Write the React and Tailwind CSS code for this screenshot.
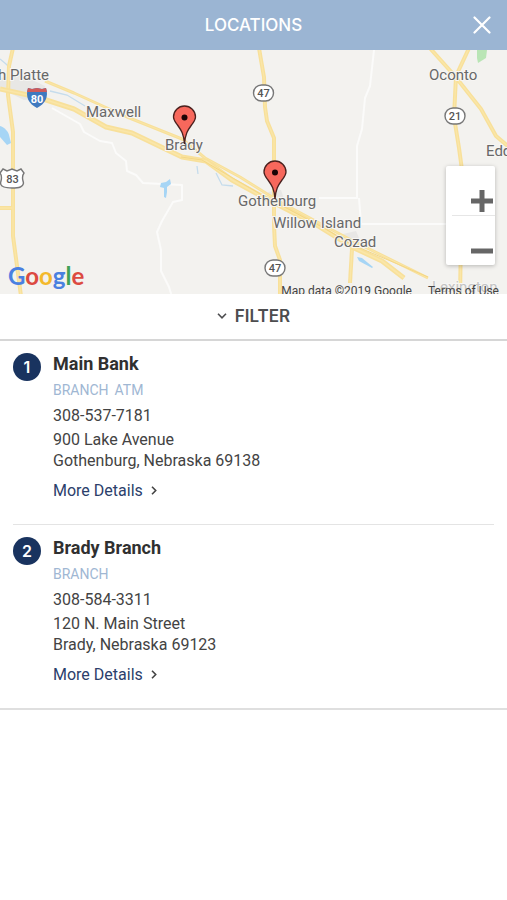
import React from "react";

const locations = [
  {
    name: "Main Bank",
    services: ["BRANCH", "ATM"],
    phone: "308-537-7181",
    street: "900 Lake Avenue",
    city: "Gothenburg, Nebraska 69138",
  },
  {
    name: "Brady Branch",
    services: ["BRANCH"],
    phone: "308-584-3311",
    street: "120 N. Main Street",
    city: "Brady, Nebraska 69123",
  },
];

function Header() {
  return (
    <header className="grid h-[50px] grid-cols-[1fr_auto_1fr] items-center bg-[#9bb5d3] px-3 text-white">
      <h1 className="col-start-2 font-['Inter',sans-serif] text-[17px] leading-6 font-medium">LOCATIONS</h1>
      <button type="button" aria-label="Close" className="justify-self-end p-1">
        <svg className="size-[18px]" viewBox="0 0 18 18" fill="none" stroke="currentColor" strokeWidth="2.2" strokeLinecap="round">
          <path d="M1.5 1.5l15 15M16.5 1.5l-15 15" />
        </svg>
      </button>
    </header>
  );
}

function Road({ d, width = 4 }) {
  return (
    <>
      <path d={d} stroke="#f8e09a" strokeWidth={width} />
      <path d={d} stroke="#fae6a8" strokeWidth={width / 3} />
    </>
  );
}

function RouteBadge({ x, y, label }) {
  return (
    <g>
      <rect x={x - 10} y={y - 8} width="20" height="16" rx="8" fill="#fff" stroke="#777" strokeWidth="1.4" />
      <text x={x} y={y + 4} textAnchor="middle" fontSize="11" fontWeight="500" fill="#555">
        {label}
      </text>
    </g>
  );
}

function Pin({ x, y }) {
  return (
    <g transform={`translate(${x} ${y})`}>
      <path
        d="M0 0C-.8-10-3-13.500-7-19c-2.500-3.500-4-5-4-8a11 11 0 0 1 22 0c0 3-1.500 4.500-4 8C3-13.500.8-10 0 0z"
        fill="#f7685c"
        stroke="#4a211e"
        strokeWidth="1.300"
      />
      <circle cy="-26.500" r="3" fill="#1b0505" />
    </g>
  );
}

function MapDrawing() {
  return (
    <svg
      className="block h-full w-full font-['Roboto',sans-serif]"
      viewBox="0 0 507 244"
      preserveAspectRatio="xMidYMid slice"
      role="img"
      aria-label="Map of branch locations"
    >
      <rect width="507" height="244" fill="#f3f2ef" />
      <path d="M0 28L22 25 45 36 42 48 24 50 0 38z" fill="#e8e7e5" />
      <path d="M343 184l13-3 3 7-6 6-12-3zM268 142l13-2 3 9-12 4z" fill="#e8e7e5" />
      <g fill="none" stroke="#fbfbfa" strokeWidth="2" strokeLinejoin="round">
        <path d="M52 58l14 8 14 8 4 8 16 9 12 2 4 10 10 8 1 10 9 4 7 8 39 2v15l-9 2-11 19-5 11 4 18v21l8 16 4 13" />
        <path d="M374 0l-4 36-5 12-3 31-5 17v52h-38M359 148l2 26h85" />
      </g>
      <g fill="#a6d5f5">
        <path d="M0 76c4 1 8 5 9 9l2 8-4 2-7-8z" />
        <path d="M161 133l5-1 4-3 1 5-4 3v5l-1 6-2-1v-9l-4-1z" />
        <path d="M357 207l5 1 11 9-1 1-13-7z" />
      </g>
      <g fill="none" stroke="#c5dcec" strokeWidth="1.300">
        <path d="M0 9l6 5 6 6M50 41l17 4 18 11M197 116l1 8M216 123l6 12 11 1" />
      </g>
      <path d="M477 0h10l-1 8-8 5-1-5z" fill="#b9e5b5" />
      <g fill="none" strokeLinejoin="round">
        <Road d="M13-2L9 16 8 45 13 82V186l8 60M12 158H0" />
        <Road d="M259-2l2 12 3 17 1 30 2 14 7 17v87l1 21 5 14v38" />
        <Road d="M428-4l26 29 27 34 15 27 13 11M470-4l-14 30-2 41 5 31 3 22-2 129" />
        <Road d="M352 199l-2 34" />
        <Road d="M45 31L74 43 127 67 182 89 205 108 240 127 280 152 351 190 428 228" width={3} />
        <Road d="M0 39L37 47 74 59 106 77 132 83 182 107 206 111 232 130 265 148 315 174 352 197 382 211 404 228" width={5} />
        <path d="M181 107l21 3 60 35 60 32 31 18 75 32" stroke="#f4d684" strokeWidth="1" />
      </g>

      <g fill="#686868" stroke="#f7f6f4" strokeWidth="2" paintOrder="stroke" fontSize="15">
        <text x="-2" y="30">h Platte</text>
        <text x="86" y="67">Maxwell</text>
        <text x="165" y="100">Brady</text>
        <text x="238" y="156">Gothenburg</text>
        <text x="273" y="178">Willow Island</text>
        <text x="334" y="197">Cozad</text>
        <text x="429" y="30">Oconto</text>
        <text x="486" y="106">Eddy</text>
        <text x="432" y="242" fill="#c3c3c3">Lexington</text>
      </g>

      <RouteBadge x={263.500} y={43} label="47" />
      <RouteBadge x={275} y={218} label="47" />
      <RouteBadge x={455} y={66} label="21" />
      <path
        d="M3 119l4 2 5-2 5 2 4-2 3 4c-3 4-1 7-.5 10-.5 4-4 5-11.500 5S.5 137 .5 133C1 130 3 127 0 123z"
        fill="#fff"
        stroke="#777"
        strokeWidth="1.400"
      />
      <text x="12.500" y="133" textAnchor="middle" fontSize="11" fontWeight="500" fill="#555">83</text>
      <path d="M28 38l4 1 5-1 5 1 4-1c3 9-1 16-9 20-8-4-12-11-9-20z" fill="#3f79bf" />
      <path d="M28 38l4 1 5-1 5 1 4-1 1 4H27z" fill="#cf5b5b" />
      <text x="37" y="53" textAnchor="middle" fontSize="11" fontWeight="700" fill="#fff">80</text>

      <Pin x={184.500} y={94} />
      <Pin x={275} y={149} />
    </svg>
  );
}

const googleLetters = [
  ["G", "text-[#4a80e0]"],
  ["o", "text-[#dc4a41]"],
  ["o", "text-[#f3b92c]"],
  ["g", "text-[#4a80e0]"],
  ["l", "text-[#3fa257]"],
  ["e", "text-[#dc4a41]"],
];

function MapPanel() {
  return (
    <section className="relative h-[244px] overflow-hidden font-['Roboto',sans-serif]">
      <MapDrawing />
      <div className="absolute bottom-0.5 left-2 font-['Lato',sans-serif] text-[24px] leading-8 font-bold" aria-label="Google">
        {googleLetters.map(([letter, color], i) => (
          <span key={i} className={color}>{letter}</span>
        ))}
      </div>
      <div className="absolute right-2 -bottom-1 flex h-[13px] gap-4 text-[12px] leading-[13px] text-[#444]">
        <span>Map data ©2019 Google</span>
        <a href="#terms">Terms of Use</a>
      </div>
      <div className="absolute right-3 bottom-[29px] flex h-[99px] w-[49px] flex-col rounded-xs bg-white pl-1.5 shadow-[0_1px_4px_rgba(0,0,0,0.25)]">
        <button type="button" aria-label="Zoom in" className="flex flex-1 items-end justify-end border-b border-[#e6e6e6] pr-0.5 pb-[3px]">
          <svg className="size-[22px]" viewBox="0 0 22 22" stroke="#666" strokeWidth="5">
            <path d="M11 0v22M0 11h22" />
          </svg>
        </button>
        <button type="button" aria-label="Zoom out" className="flex flex-1 items-end justify-end pr-0.5 pb-[3px]">
          <svg className="size-[22px]" viewBox="0 0 22 22" stroke="#666" strokeWidth="5">
            <path d="M0 11h22" />
          </svg>
        </button>
      </div>
    </section>
  );
}

function Filter() {
  return (
    <button
      type="button"
      className="flex h-[47px] w-full items-center justify-center gap-2 border-b-2 border-[#d6d6d6] pb-0.5 font-['Inter',sans-serif] text-[17px] leading-6 font-semibold text-[#4d4d4f]"
    >
      <svg className="h-[6px] w-[10px]" viewBox="0 0 10 6" fill="none" stroke="currentColor" strokeWidth="1.600">
        <path d="M1 .8l4 4 4-4" />
      </svg>
      FILTER
    </button>
  );
}

function LocationItem({ index, location }) {
  return (
    <li className="flex gap-3 border-b border-[#e4e4e4] pt-3 pb-[23px] last:border-b-0">
      <span className="flex size-7 shrink-0 items-center justify-center rounded-full bg-[#19335f] font-['Inter',sans-serif] text-[16px] leading-5 font-semibold text-white">
        {index}
      </span>
      <div className="text-[16px] leading-[21px] text-[#434343]">
        <h2 className="text-[18px] leading-[22px] font-bold text-[#303030]">{location.name}</h2>
        <p className="mt-[5px] flex gap-1.5 text-[14px] leading-5 text-[#a0b7d3]">
          {location.services.map((service) => (
            <span key={service}>{service}</span>
          ))}
        </p>
        <p className="mt-[5px]">{location.phone}</p>
        <address className="mt-[3px] not-italic">
          {location.street}
          <br />
          {location.city}
        </address>
        <a href="#details" className="mt-[9px] flex items-center gap-2 text-[#2b406b]">
          More Details
          <svg className="h-[9px] w-[6px]" viewBox="0 0 6 9" fill="none" stroke="#444" strokeWidth="1.600">
            <path d="M1 .8l3.700 3.700L1 8.200" />
          </svg>
        </a>
      </div>
    </li>
  );
}

export default function App() {
  return (
    <main className="min-h-screen bg-white font-['Roboto',sans-serif]">
      <Header />
      <MapPanel />
      <Filter />
      <ul className="border-b-2 border-[#dfdfdf] px-[13px]">
        {locations.map((location, i) => (
          <LocationItem key={location.name} index={i + 1} location={location} />
        ))}
      </ul>
    </main>
  );
}
